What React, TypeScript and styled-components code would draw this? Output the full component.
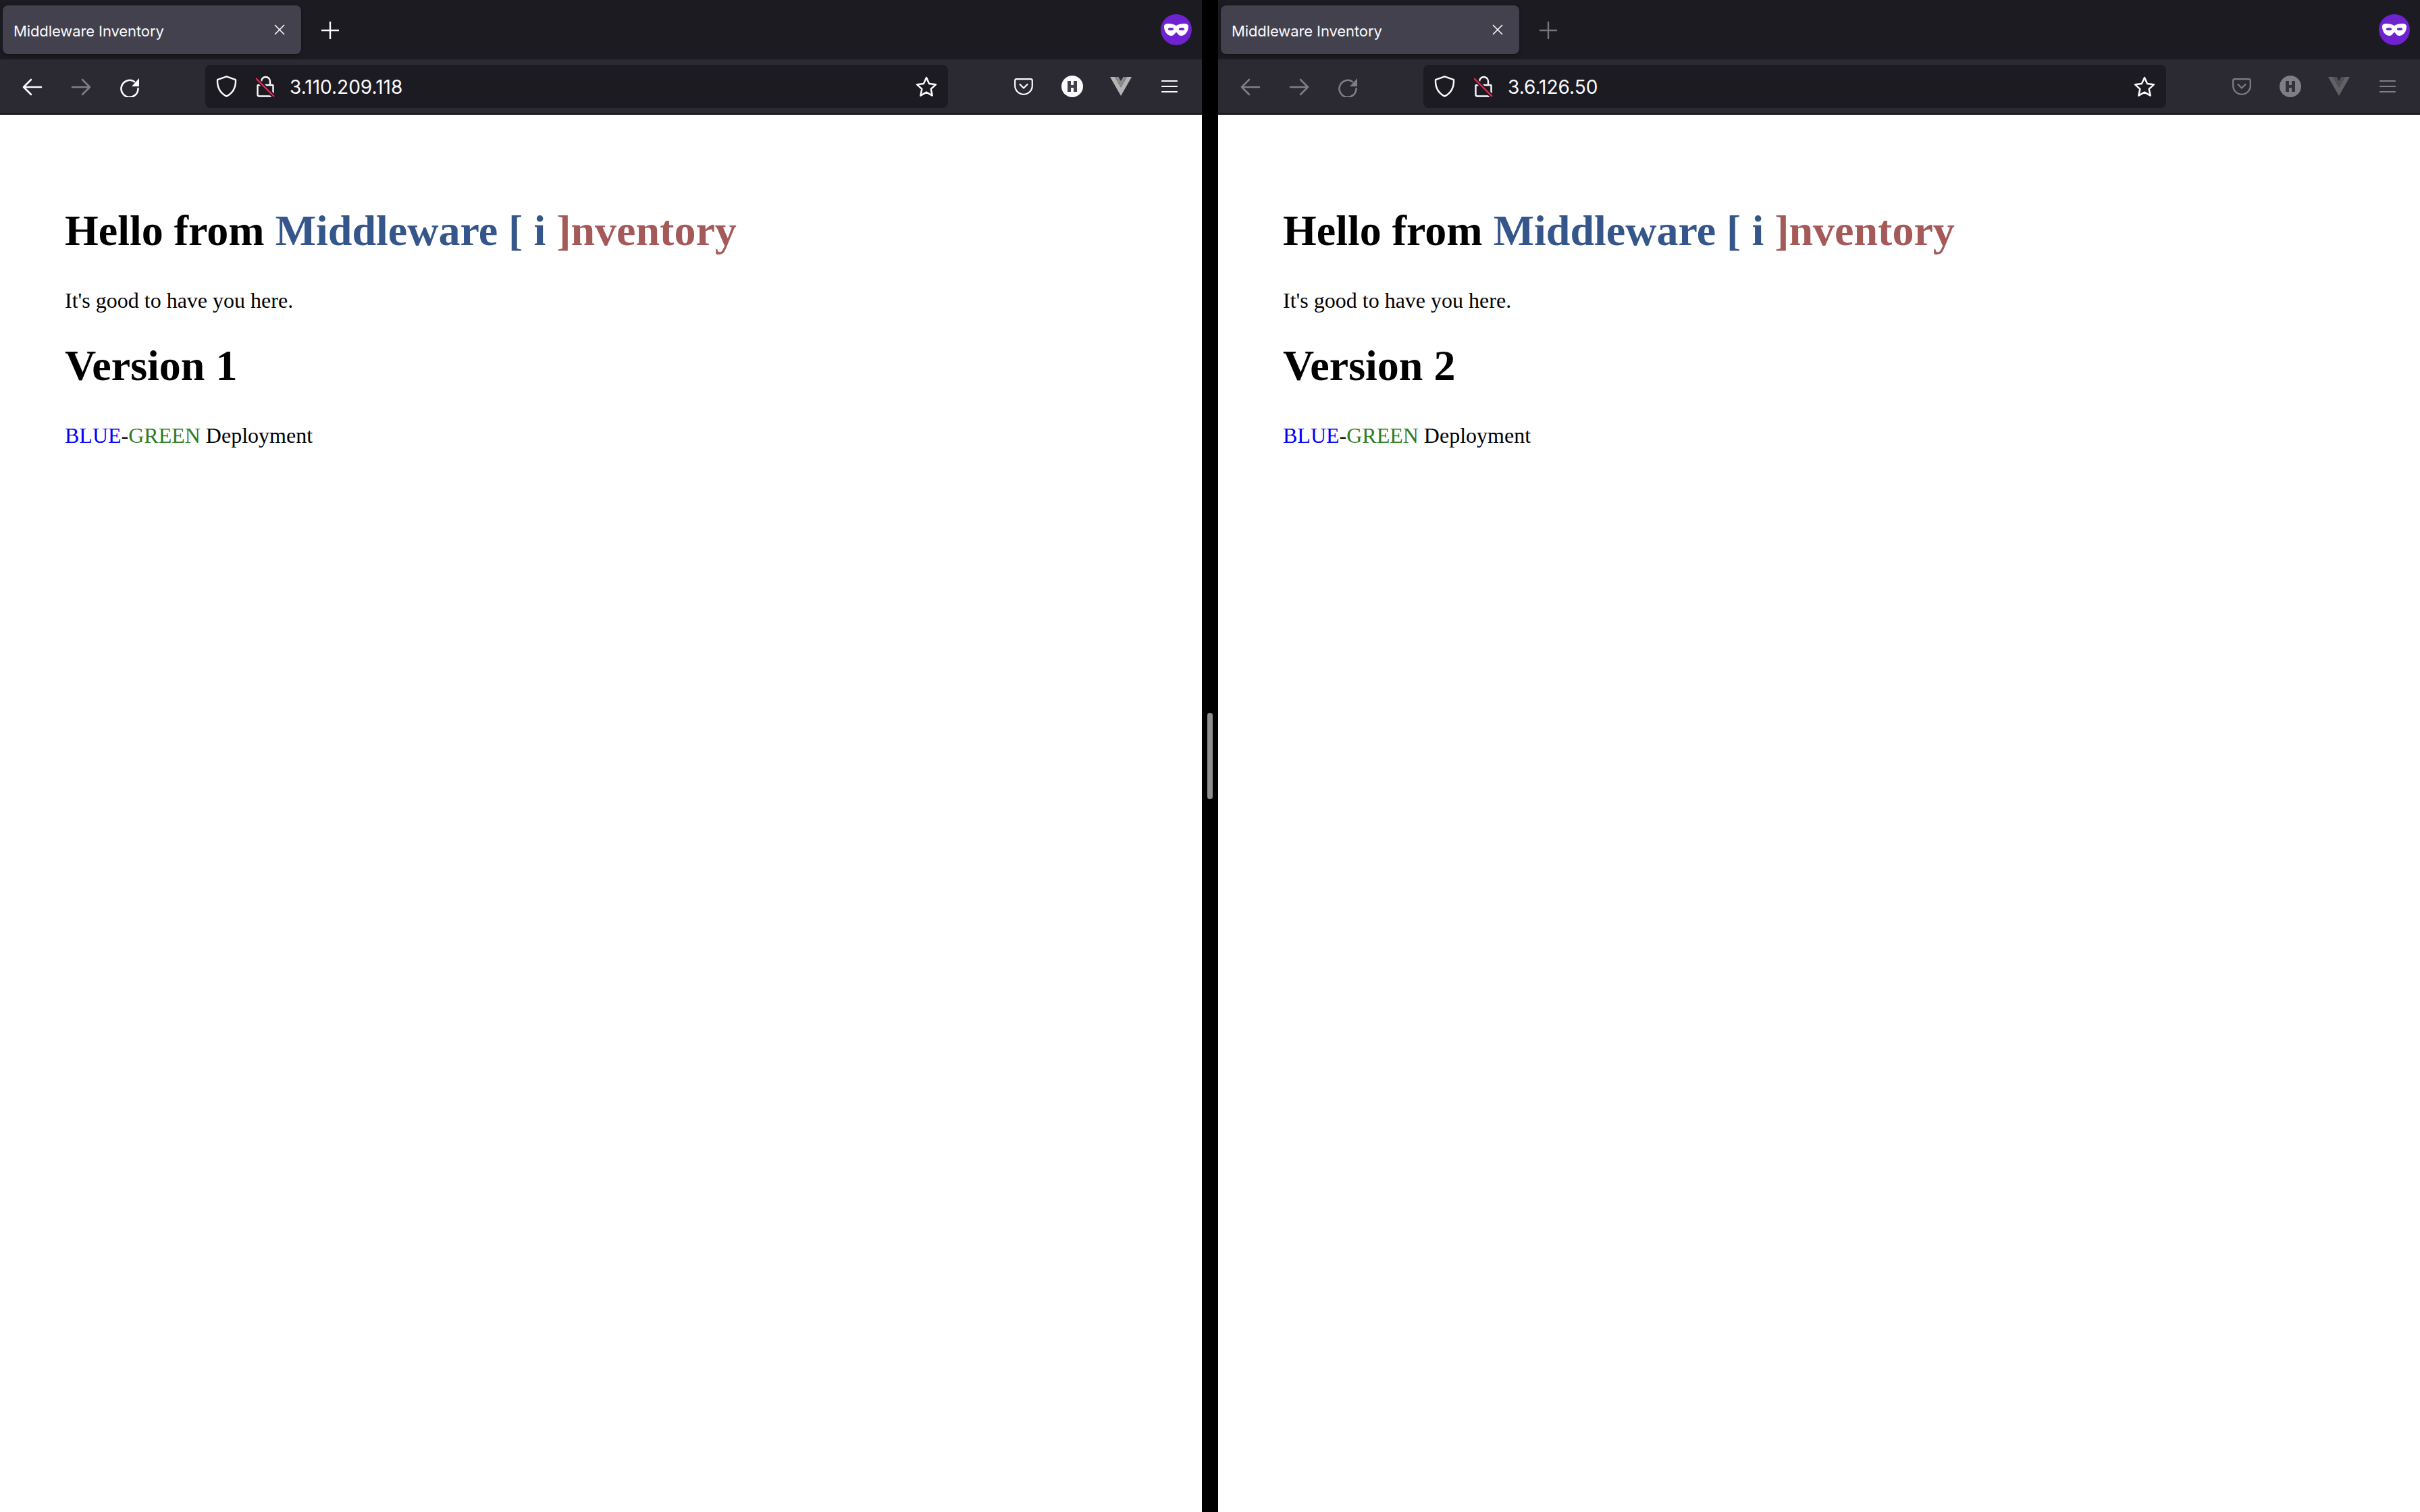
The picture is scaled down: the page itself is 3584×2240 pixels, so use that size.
import styled, { createGlobalStyle } from 'styled-components';

const GlobalStyle = createGlobalStyle`
    html, body {
        margin: 0;
        padding: 0;
        background: #000;
    }
`;

const Screen = styled.div`
    display: flex;
    width: 3584px;
    height: 2240px;
    background: #000;
    overflow: hidden;
`;

const Divider = styled.div`
    flex: 0 0 24px;
    display: flex;
    align-items: flex-start;
    justify-content: center;
    padding-top: 1056px;
    box-sizing: border-box;
`;

const Handle = styled.div`
    width: 8px;
    height: 128px;
    border-radius: 4px;
    background: #8e8e8e;
`;

const Window = styled.div`
    flex: 0 0 1780px;
    display: flex;
    flex-direction: column;
    background: #fff;
`;

const TabBar = styled.div`
    height: 88px;
    box-sizing: border-box;
    padding: 8px 15px 8px 4px;
    display: flex;
    align-items: flex-start;
    background: #1c1b22;
`;

const Tab = styled.div`
    width: 442px;
    height: 72px;
    box-sizing: border-box;
    padding: 0 24px 0 16px;
    display: flex;
    align-items: center;
    justify-content: space-between;
    border-radius: 8px;
    background: #42414d;
    box-shadow: 0 1px 4px rgba(0, 0, 0, 0.4);
`;

const TabTitle = styled.span`
    margin-top: 4px;
    font-family: Inter, 'Noto Sans', sans-serif;
    font-size: 22px;
    letter-spacing: -0.1px;
    color: #fbfbfe;
`;

const NewTab = styled.div<{ $dim: boolean }>`
    margin-left: 30px;
    height: 74px;
    display: flex;
    align-items: center;
    opacity: ${(p) => (p.$dim ? 0.4 : 1)};
`;

const Account = styled.div`
    margin-left: auto;
    margin-top: 13px;
    height: 46px;
`;

const Toolbar = styled.div`
    height: 82px;
    box-sizing: border-box;
    padding: 8px 12px 0;
    display: flex;
    align-items: flex-start;
    background: #2b2a33;
    border-bottom: 2px solid #111;
`;

const ToolButton = styled.div<{ $dim?: boolean }>`
    flex: 0 0 72px;
    height: 64px;
    display: flex;
    align-items: center;
    justify-content: center;
    opacity: ${(p) => (p.$dim ? 0.4 : 1)};
`;

const UrlBar = styled.div`
    flex: 1;
    height: 64px;
    margin: 0 76px;
    box-sizing: border-box;
    padding: 0 16px;
    display: flex;
    align-items: center;
    border-radius: 8px;
    background: #1c1b22;
`;

const UrlText = styled.span`
    margin: 2px 0 0 22px;
    font-family: Inter, 'Noto Sans', sans-serif;
    font-size: 28px;
    letter-spacing: 0;
    color: #fbfbfe;
`;

const LockWrap = styled.div`
    margin-left: 28px;
    display: flex;
`;

const StarWrap = styled.div`
    margin-left: auto;
    display: flex;
`;

const Page = styled.div`
    flex: 1;
    padding: 94px 96px 0;
    font-family: 'Liberation Serif', 'Times New Roman', serif;
    color: #000;
    background: #fff;
`;

const Heading = styled.h1`
    margin: 41px 0 48px;
    font-size: 64px;
    font-weight: bold;
`;

const Text = styled.p`
    margin: 32px 0;
    font-size: 32px;
`;

const Tint = styled.span<{ $color: string }>`
    color: ${(p) => p.$color};
`;

const ICON = '#fbfbfe';
const MASK = '#6e22d0';

const CloseIcon = () => (
    <svg width="16" height="16" viewBox="0 0 16 16" fill="none" stroke={ICON} strokeWidth="1.6">
        <path d="M1 1l14 14M15 1L1 15" />
    </svg>
);

const PlusIcon = () => (
    <svg width="26" height="26" viewBox="0 0 26 26" fill="none" stroke={ICON} strokeWidth="2.4">
        <path d="M13 0v26M0 13h26" />
    </svg>
);

const ArrowIcon = ({ flip }: { flip?: boolean }) => (
    <svg
        width="30"
        height="28"
        viewBox="0 -2 30 28"
        fill="none"
        stroke={ICON}
        strokeWidth="2.6"
        strokeLinecap="round"
        strokeLinejoin="round"
        transform={flip ? 'scale(-1 1)' : undefined}
    >
        <path d="M13 2L2 13l11 11M2 13h26" />
    </svg>
);

const ReloadIcon = () => (
    <svg width="28" height="32" viewBox="0 -4 28 32" fill="none">
        <path
            d="M21 5A12.500 12.500 0 1 0 26.500 15"
            stroke={ICON}
            strokeWidth="2.6"
            strokeLinecap="round"
        />
        <path d="M28 0v12H17z" fill={ICON} />
    </svg>
);

const ShieldIcon = () => (
    <svg width="31" height="32" viewBox="0 0 31 32" fill="none" stroke={ICON} strokeWidth="2.4" strokeLinejoin="round">
        <path d="M15.500 1.400L29 6.200c.4 10.600-3.600 19.400-13.500 24.400C5.600 25.600 1.600 16.800 2 6.200z" />
    </svg>
);

const LockIcon = () => (
    <svg width="28" height="32" viewBox="0 0 28 32" fill="none">
        <path
            d="M8 14V8.500a6.500 6.500 0 0 1 13 0V14M3.500 14h21a1 1 0 0 1 1 1v14a1.500 1.500 0 0 1-1.500 1.500H5A2.500 2.500 0 0 1 2.500 28V15a1 1 0 0 1 1-1z"
            stroke={ICON}
            strokeWidth="2.4"
        />
        <path d="M0 4l27 27" stroke="#1c1b22" strokeWidth="6" />
        <path d="M0 4l27 27" stroke="#e22850" strokeWidth="2.400" />
    </svg>
);

const StarIcon = () => (
    <svg width="32" height="31" viewBox="0 0 32 31" fill="none" stroke={ICON} strokeWidth="2.5" strokeLinejoin="round">
        <path d="M16 2l4.100 9 9.900 1.200-7.300 6.700 2 9.700-8.700-4.900-8.700 4.900 2-9.700L2 12.200 11.900 11z" />
    </svg>
);

const PocketIcon = () => (
    <svg width="28" height="25" viewBox="0 0 28 25" fill="none" stroke={ICON} strokeWidth="2.2" strokeLinecap="round" strokeLinejoin="round">
        <path d="M3.500 1.200h21a2.300 2.300 0 0 1 2.300 2.300v7.500a12.800 12.800 0 0 1-25.600 0V3.500a2.300 2.300 0 0 1 2.300-2.300z" />
        <path d="M8.500 9l5.500 5.500L19.500 9" />
    </svg>
);

const BadgeIcon = () => (
    <svg width="32" height="32" viewBox="0 0 32 32">
        <circle cx="16" cy="16" r="16" fill={ICON} />
        <path d="M9 8h5v6h4V8h5v16h-5v-6h-4v6H9z" fill="#42414d" />
    </svg>
);

const VeeIcon = () => (
    <svg width="32" height="28" viewBox="0 0 32 28">
        <path d="M0 0h7l9 15.500L25 0h7L16 28z" fill="#b4b4b4" />
        <path d="M7 0h5.500L16 6l3.500-6H25l-9 15.500z" fill="#8a8a8a" />
    </svg>
);

const MenuIcon = () => (
    <svg width="24" height="20" viewBox="0 0 24 20" fill="none" stroke={ICON} strokeWidth="2.200" strokeLinecap="round">
        <path d="M1 2h22M1 10h22M1 18h22" />
    </svg>
);

const MaskIcon = () => (
    <svg width="46" height="46" viewBox="0 0 46 46">
        <circle cx="23" cy="23" r="23" fill={MASK} />
        <path
            d="M5 18.500C5 15 8 14 11 14c5 0 9 1 12 3 3-2 7-3 12-3 3 0 6 1 6 4.500C41 26 36 32 30 32c-3 0-4.500-3-7-5.500C20.500 29 19 32 16 32 10 32 5 26 5 18.500z"
            fill="#fff"
        />
        <ellipse cx="15" cy="22" rx="4.200" ry="2" fill={MASK} />
        <ellipse cx="31" cy="22" rx="4.200" ry="2" fill={MASK} />
    </svg>
);

type BrowserProps = {
    address: string;
    version: number;
    focused: boolean;
};

const Browser = ({ address, version, focused }: BrowserProps) => (
    <Window>
        <TabBar>
            <Tab>
                <TabTitle>Middleware Inventory</TabTitle>
                <CloseIcon />
            </Tab>
            <NewTab $dim={!focused}>
                <PlusIcon />
            </NewTab>
            <Account>
                <MaskIcon />
            </Account>
        </TabBar>
        <Toolbar>
            <ToolButton $dim={!focused}>
                <ArrowIcon />
            </ToolButton>
            <ToolButton $dim>
                <ArrowIcon flip />
            </ToolButton>
            <ToolButton $dim={!focused}>
                <ReloadIcon />
            </ToolButton>
            <UrlBar>
                <ShieldIcon />
                <LockWrap>
                    <LockIcon />
                </LockWrap>
                <UrlText>{address}</UrlText>
                <StarWrap>
                    <StarIcon />
                </StarWrap>
            </UrlBar>
            <ToolButton $dim={!focused}>
                <PocketIcon />
            </ToolButton>
            <ToolButton $dim={!focused}>
                <BadgeIcon />
            </ToolButton>
            <ToolButton $dim={!focused}>
                <VeeIcon />
            </ToolButton>
            <ToolButton $dim={!focused}>
                <MenuIcon />
            </ToolButton>
        </Toolbar>
        <Page>
            <Heading>
                Hello from <Tint $color="#34568b">Middleware [ i </Tint>
                <Tint $color="#a55a5a">]nventory</Tint>
            </Heading>
            <Text>It's good to have you here.</Text>
            <Heading>Version {version}</Heading>
            <Text>
                <Tint $color="#0000ff">BLUE</Tint>-<Tint $color="#2e7d1e">GREEN</Tint> Deployment
            </Text>
        </Page>
    </Window>
);

const App = () => (
    <Screen>
        <GlobalStyle />
        <Browser address="3.110.209.118" version={1} focused />
        <Divider>
            <Handle />
        </Divider>
        <Browser address="3.6.126.50" version={2} focused={false} />
    </Screen>
);

export default App;
